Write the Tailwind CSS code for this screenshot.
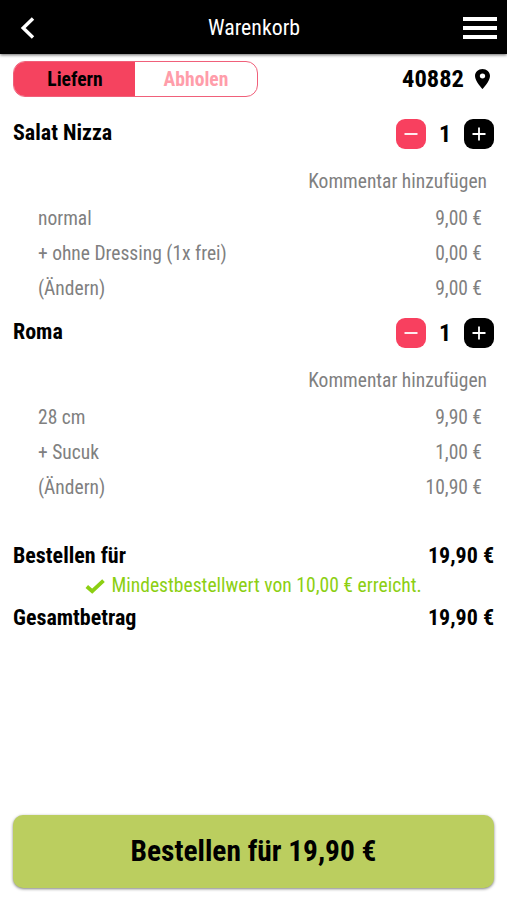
<!DOCTYPE html>
<html lang="de">

<head>
    <meta charset="utf-8" />
    <meta name="viewport" content="width=device-width, initial-scale=1.0">
    <title>Warenkorb</title>
    <script src="https://cdn.jsdelivr.net/npm/@tailwindcss/browser@4"></script>
</head>

<body class="bg-white text-black font-['Roboto_Condensed','Roboto',sans-serif] font-stretch-condensed">

    <div class="w-full h-[900px] flex flex-col overflow-hidden">

        <!-- Top bar -->
        <header class="h-[54px] shrink-0 bg-black text-white flex items-center justify-between pt-0.5 pl-5 pr-2.5 shadow-[0_1px_3px_rgba(0,0,0,0.6)]">
            <button class="w-[25px]" aria-label="Zurück">
                <svg class="w-4 h-[22px]" viewBox="0 0 16 22" fill="none" stroke="currentColor" stroke-width="3.4">
                    <path d="M13 1.5L3.2 11L13 20.5" />
                </svg>
            </button>
            <h1 class="text-[21.8px] leading-none">Warenkorb</h1>
            <button class="w-[34px] flex flex-col gap-[5px]" aria-label="Menü">
                <span class="h-1 bg-white"></span>
                <span class="h-1 bg-white"></span>
                <span class="h-1 bg-white"></span>
            </button>
        </header>

        <main class="flex-1 flex flex-col px-[13px] pt-[7px]">

            <!-- Delivery / pickup -->
            <div class="h-9 flex items-center justify-between">
                <div class="w-[245px] h-full flex rounded-xl border border-[#f0607a] overflow-hidden text-[19.6px] font-bold">
                    <button class="w-[121px] pl-px pt-0.5 bg-[#f5435f]">Liefern</button>
                    <button class="flex-1 pt-0.5 text-[#ff9daa]">Abholen</button>
                </div>
                <div class="flex items-center gap-[11px] pr-1 text-[24.5px] font-bold">
                    <span>40882</span>
                    <svg class="w-[15px] h-5" viewBox="5 2 14 20" preserveAspectRatio="none" fill="currentColor">
                        <path d="M12 2C8.13 2 5 5.13 5 9c0 5.25 7 13 7 13s7-7.75 7-13c0-3.87-3.13-7-7-7zm0 9.5a2.5 2.5 0 0 1 0-5 2.5 2.5 0 0 1 0 5z" />
                    </svg>
                </div>
            </div>

            <!-- Salat Nizza -->
            <section class="mt-[22px] h-[199px]">
                <div class="h-[30px] flex items-center justify-between">
                    <h2 class="text-[22px] font-bold leading-none pb-0.5">Salat Nizza</h2>
                    <div class="flex items-center">
                        <button class="size-[30px] rounded-[9px] bg-[#f8405f] text-white flex items-center justify-center" aria-label="Weniger">
                            <svg class="size-3.5" viewBox="0 0 14 14" stroke="currentColor" stroke-width="1.8"><path d="M.5 7H13.5" /></svg>
                        </button>
                        <span class="w-[38px] text-center text-[24px] font-bold leading-none">1</span>
                        <button class="size-[30px] rounded-[9px] bg-black text-white flex items-center justify-center" aria-label="Mehr">
                            <svg class="size-3.5" viewBox="0 0 14 14" stroke="currentColor" stroke-width="1.8"><path d="M.5 7H13.5M7 .5V13.5" /></svg>
                        </button>
                    </div>
                </div>
                <div class="mt-[15px] h-9 pr-[7px] flex items-center justify-end text-[19.5px] text-[#808080]">Kommentar hinzufügen</div>
                <div class="pt-[0.5px] pl-[25px] pr-3 text-[19.5px] text-[#808080]">
                    <div class="h-[35.4px] flex items-center justify-between"><span>normal</span><span>9,00 €</span></div>
                    <div class="h-[35.4px] flex items-center justify-between"><span>+ ohne Dressing (1x frei)</span><span>0,00 €</span></div>
                    <div class="h-[35.4px] flex items-center justify-between"><span>(Ändern)</span><span>9,00 €</span></div>
                </div>
            </section>

            <!-- Roma -->
            <section class="h-[199px]">
                <div class="h-[30px] flex items-center justify-between">
                    <h2 class="text-[22px] font-bold leading-none pb-0.5">Roma</h2>
                    <div class="flex items-center">
                        <button class="size-[30px] rounded-[9px] bg-[#f8405f] text-white flex items-center justify-center" aria-label="Weniger">
                            <svg class="size-3.5" viewBox="0 0 14 14" stroke="currentColor" stroke-width="1.8"><path d="M.5 7H13.5" /></svg>
                        </button>
                        <span class="w-[38px] text-center text-[24px] font-bold leading-none">1</span>
                        <button class="size-[30px] rounded-[9px] bg-black text-white flex items-center justify-center" aria-label="Mehr">
                            <svg class="size-3.5" viewBox="0 0 14 14" stroke="currentColor" stroke-width="1.8"><path d="M.5 7H13.5M7 .5V13.5" /></svg>
                        </button>
                    </div>
                </div>
                <div class="mt-[15px] h-9 pr-[7px] flex items-center justify-end text-[19.5px] text-[#808080]">Kommentar hinzufügen</div>
                <div class="pt-[0.5px] pl-[25px] pr-3 text-[19.5px] text-[#808080]">
                    <div class="h-[35.4px] flex items-center justify-between"><span>28 cm</span><span>9,90 €</span></div>
                    <div class="h-[35.4px] flex items-center justify-between"><span>+ Sucuk</span><span>1,00 €</span></div>
                    <div class="h-[35.4px] flex items-center justify-between"><span>(Ändern)</span><span>10,90 €</span></div>
                </div>
            </section>

            <!-- Totals -->
            <section class="mt-[22px] text-[22px] font-bold">
                <div class="h-8 flex items-center justify-between"><span>Bestellen für</span><span>19,90 €</span></div>
                <div class="h-[30px] flex items-center justify-center gap-1.5 text-[19.6px] font-normal text-[#8ccf12]">
                    <svg class="w-5 h-[15px]" viewBox="0 0 20 15" fill="none" stroke="currentColor" stroke-width="3.8">
                        <path d="M1.8 7.5L7.2 12.2L18.5 1.7" />
                    </svg>
                    <span>Mindestbestellwert von 10,00 € erreicht.</span>
                </div>
                <div class="h-8 flex items-center justify-between"><span>Gesamtbetrag</span><span>19,90 €</span></div>
            </section>

            <button class="mt-auto mb-3 h-[73px] rounded-[10px] bg-[#bbce5f] text-[29.4px] font-bold shadow-[0_1px_3px_rgba(0,0,0,0.5)]">Bestellen für 19,90 €</button>
        </main>
    </div>

</body>

</html>
